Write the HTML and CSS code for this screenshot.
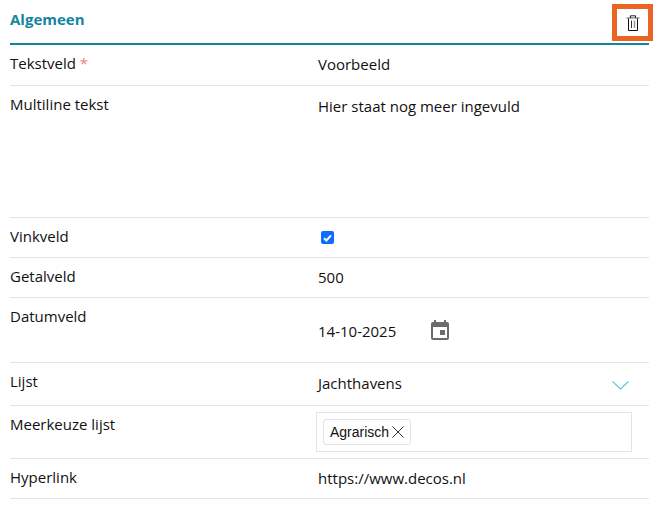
FILE: index.html
```html
<!DOCTYPE html>
<html lang="nl">
<head>
<meta charset="utf-8">
<title>Algemeen</title>
<link rel="stylesheet" href="styles.css">
</head>
<body>
<section class="panel">
  <header class="panel-head">
    <h2 class="panel-title">Algemeen</h2>
    <button class="trash" type="button" aria-label="Verwijderen">
      <svg width="14" height="16" viewBox="0 0 14 16" fill="none">
        <path d="M0.5 3H13.5" stroke="#777" stroke-width="1.2"/>
        <path d="M4.5 3V0.8H9.5V3" stroke="#222" stroke-width="1"/>
        <path d="M2.5 3.5V15.5H11.5V3.5" stroke="#111" stroke-width="1"/>
        <path d="M5.5 5.5V13" stroke="#333" stroke-width="1"/>
        <path d="M8.5 5.5V13" stroke="#999" stroke-width="1.6"/>
      </svg>
    </button>
  </header>
  <div class="row row-text">
    <div class="label">Tekstveld <span class="req">*</span></div>
    <div class="value">Voorbeeld</div>
  </div>
  <div class="row row-multi">
    <div class="label">Multiline tekst</div>
    <div class="value">Hier staat nog meer ingevuld</div>
  </div>
  <div class="row row-check">
    <div class="label">Vinkveld</div>
    <div class="value"><span class="check"><svg width="9" height="8" viewBox="0 0 9 8" fill="none"><path d="M1 4.2L3.4 6.5L8 1.3" stroke="#fff" stroke-width="2"/></svg></span></div>
  </div>
  <div class="row row-num">
    <div class="label">Getalveld</div>
    <div class="value">500</div>
  </div>
  <div class="row row-date">
    <div class="label">Datumveld</div>
    <div class="value date">
      <span>14-10-2025</span>
      <svg class="cal" width="18" height="20" viewBox="0 0 18 20"><path fill="#6b6b6b" fill-rule="evenodd" d="M3 0H5V2H13V0H15V2H16A2 2 0 0 1 18 4V18A2 2 0 0 1 16 20H2A2 2 0 0 1 0 18V4A2 2 0 0 1 2 2H3ZM2 7V18H16V7ZM9 10H14V15H9Z"/></svg>
    </div>
  </div>
  <div class="row row-list">
    <div class="label">Lijst</div>
    <div class="value select">
      <span>Jachthavens</span>
      <svg width="17" height="9" viewBox="0 0 17 9" fill="none"><path d="M0.5 0.5L8.5 8L16.5 0.5" stroke="#5bc4e8" stroke-width="1.1"/></svg>
    </div>
  </div>
  <div class="row row-multi-select">
    <div class="label">Meerkeuze lijst</div>
    <div class="tagbox">
      <span class="tag">Agrarisch <svg width="12" height="12" viewBox="0 0 12 12" fill="none"><path d="M0.5 0.5L11.5 11.5M11.5 0.5L0.5 11.5" stroke="#333" stroke-width="1"/></svg></span>
    </div>
  </div>
  <div class="row row-link">
    <div class="label">Hyperlink</div>
    <div class="value">https://www.decos.nl</div>
  </div>
</section>
</body>
</html>
```
FILE: styles.css
```css
* { box-sizing: border-box; }
html, body { margin: 0; background: #fff; }
body {
  padding: 0 11px 0 10px;
  font-family: "Open Sans", sans-serif;
  font-size: 15px;
  color: #111;
}
.panel { width: 639px; }
.panel-head {
  height: 45px;
  border-bottom: 2px solid #13869f;
  display: flex;
  align-items: flex-start;
  justify-content: space-between;
}
.panel-title {
  margin: 9px 0 0;
  font-size: 15px;
  line-height: 20px;
  font-weight: 700;
  color: #13869f;
}
.trash {
  position: absolute;
  left: 612px;
  top: 4px;
  width: 41px;
  height: 37px;
  padding: 6px 0 0;
  border: 5px solid #ec6423;
  background: #fff;
  display: flex;
  justify-content: center;
  align-items: flex-start;
}
.row {
  display: grid;
  grid-template-columns: 308px 1fr;
  border-bottom: 1px solid #e4e4e4;
  line-height: 20px;
}
.label { padding-top: 8px; }
.value { padding-top: 9px; }
.req { color: #f27c7c; }
.row-text { height: 41px; }
.row-multi { height: 132px; }
.row-multi .value { padding-top: 10px; }
.row-check { height: 40px; }
.row-check .value { padding: 13px 0 0 3px; }
.check {
  display: flex;
  align-items: center;
  justify-content: center;
  width: 13px;
  height: 13px;
  border-radius: 2px;
  background: #0d6efd;
}
.row-num { height: 40px; }
.row-date { height: 65px; }
.date { display: flex; align-items: flex-start; padding-top: 23px; }
.cal { margin: -1px 0 0 35px; }
.row-list { height: 43px; }
.select { display: flex; justify-content: space-between; align-items: flex-start; padding: 10px 20px 0 0; }
.select svg { margin-top: 8px; }
.row-multi-select { height: 53px; }
.tagbox {
  margin: 6px 17px 0 -2px;
  height: 40px;
  border: 1px solid #e4e4e4;
  padding: 6px 6px;
}
.tag {
  display: inline-flex;
  align-items: center;
  gap: 3px;
  height: 26px;
  padding: 0 6px;
  border: 1px solid #e4e4e4;
  border-radius: 3px;
  font-family: "Liberation Sans", sans-serif;
  font-size: 14px;
}
.row-link { height: 40px; }
```
